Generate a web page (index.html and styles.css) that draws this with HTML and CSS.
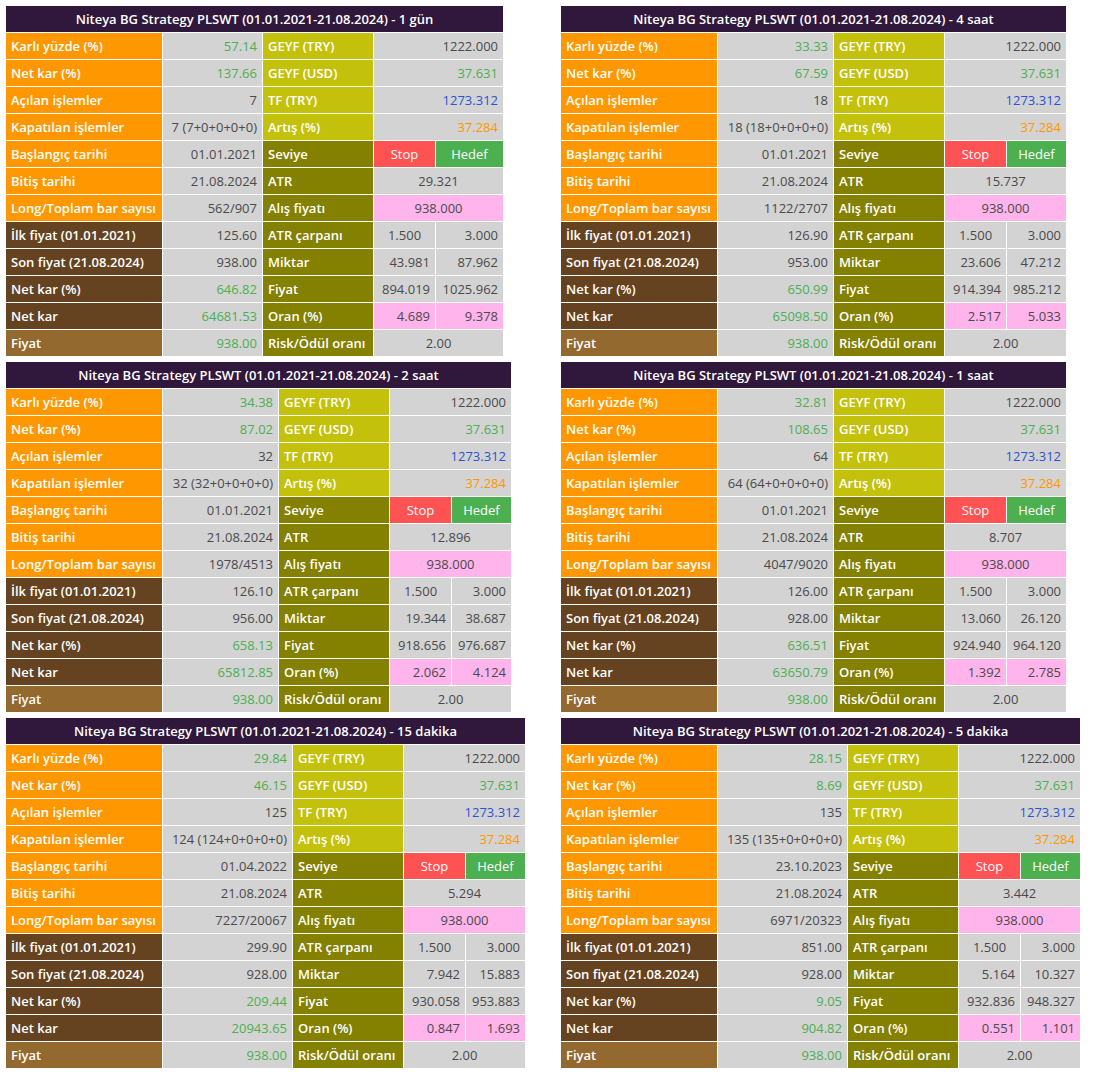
FILE: index.html
```html
<!DOCTYPE html>
<html lang="tr">
<head>
<meta charset="utf-8">
<title>Niteya BG Strategy PLSWT</title>
<link rel="stylesheet" href="styles.css">
</head>
<body>
<div class="board">

<table class="t">
<colgroup><col class="c1"><col class="c2a"><col class="c3"><col class="c4"><col class="c5a"></colgroup>
<tr><th colspan="5">Niteya BG Strategy PLSWT (01.01.2021-21.08.2024) - 1 gün</th></tr>
<tr><td class="l or">Karlı yüzde (%)</td><td class="v tg">57.14</td><td class="l ye">GEYF (TRY)</td><td class="v" colspan="2">1222.000</td></tr>
<tr><td class="l or">Net kar (%)</td><td class="v tg">137.66</td><td class="l ye">GEYF (USD)</td><td class="v tg" colspan="2">37.631</td></tr>
<tr><td class="l or">Açılan işlemler</td><td class="v">7</td><td class="l ye">TF (TRY)</td><td class="v tb" colspan="2">1273.312</td></tr>
<tr><td class="l or">Kapatılan işlemler</td><td class="v">7 (7+0+0+0+0)</td><td class="l ye">Artış (%)</td><td class="v to" colspan="2">37.284</td></tr>
<tr><td class="l or">Başlangıç tarihi</td><td class="v">01.01.2021</td><td class="l ol">Seviye</td><td class="stop">Stop</td><td class="hedef">Hedef</td></tr>
<tr><td class="l or">Bitiş tarihi</td><td class="v">21.08.2024</td><td class="l ol">ATR</td><td class="v c" colspan="2">29.321</td></tr>
<tr><td class="l or">Long/Toplam bar sayısı</td><td class="v">562/907</td><td class="l ol">Alış fiyatı</td><td class="v c pk" colspan="2">938.000</td></tr>
<tr><td class="l br">İlk fiyat (01.01.2021)</td><td class="v">125.60</td><td class="l ol">ATR çarpanı</td><td class="v c">1.500</td><td class="v">3.000</td></tr>
<tr><td class="l br">Son fiyat (21.08.2024)</td><td class="v">938.00</td><td class="l ol">Miktar</td><td class="v">43.981</td><td class="v">87.962</td></tr>
<tr><td class="l br">Net kar (%)</td><td class="v tg">646.82</td><td class="l ol">Fiyat</td><td class="v">894.019</td><td class="v">1025.962</td></tr>
<tr><td class="l br">Net kar</td><td class="v tg">64681.53</td><td class="l ol">Oran (%)</td><td class="v pk">4.689</td><td class="v pk">9.378</td></tr>
<tr><td class="l lb">Fiyat</td><td class="v tg">938.00</td><td class="l ol">Risk/Ödül oranı</td><td class="v c" colspan="2">2.00</td></tr>
</table>

<table class="t">
<colgroup><col class="c1"><col class="c2b"><col class="c3"><col class="c4"><col class="c5b"></colgroup>
<tr><th colspan="5">Niteya BG Strategy PLSWT (01.01.2021-21.08.2024) - 4 saat</th></tr>
<tr><td class="l or">Karlı yüzde (%)</td><td class="v tg">33.33</td><td class="l ye">GEYF (TRY)</td><td class="v" colspan="2">1222.000</td></tr>
<tr><td class="l or">Net kar (%)</td><td class="v tg">67.59</td><td class="l ye">GEYF (USD)</td><td class="v tg" colspan="2">37.631</td></tr>
<tr><td class="l or">Açılan işlemler</td><td class="v">18</td><td class="l ye">TF (TRY)</td><td class="v tb" colspan="2">1273.312</td></tr>
<tr><td class="l or">Kapatılan işlemler</td><td class="v">18 (18+0+0+0+0)</td><td class="l ye">Artış (%)</td><td class="v to" colspan="2">37.284</td></tr>
<tr><td class="l or">Başlangıç tarihi</td><td class="v">01.01.2021</td><td class="l ol">Seviye</td><td class="stop">Stop</td><td class="hedef">Hedef</td></tr>
<tr><td class="l or">Bitiş tarihi</td><td class="v">21.08.2024</td><td class="l ol">ATR</td><td class="v c" colspan="2">15.737</td></tr>
<tr><td class="l or">Long/Toplam bar sayısı</td><td class="v">1122/2707</td><td class="l ol">Alış fiyatı</td><td class="v c pk" colspan="2">938.000</td></tr>
<tr><td class="l br">İlk fiyat (01.01.2021)</td><td class="v">126.90</td><td class="l ol">ATR çarpanı</td><td class="v c">1.500</td><td class="v">3.000</td></tr>
<tr><td class="l br">Son fiyat (21.08.2024)</td><td class="v">953.00</td><td class="l ol">Miktar</td><td class="v">23.606</td><td class="v">47.212</td></tr>
<tr><td class="l br">Net kar (%)</td><td class="v tg">650.99</td><td class="l ol">Fiyat</td><td class="v">914.394</td><td class="v">985.212</td></tr>
<tr><td class="l br">Net kar</td><td class="v tg">65098.50</td><td class="l ol">Oran (%)</td><td class="v pk">2.517</td><td class="v pk">5.033</td></tr>
<tr><td class="l lb">Fiyat</td><td class="v tg">938.00</td><td class="l ol">Risk/Ödül oranı</td><td class="v c" colspan="2">2.00</td></tr>
</table>

<table class="t">
<colgroup><col class="c1"><col class="c2b"><col class="c3"><col class="c4"><col class="c5b"></colgroup>
<tr><th colspan="5">Niteya BG Strategy PLSWT (01.01.2021-21.08.2024) - 2 saat</th></tr>
<tr><td class="l or">Karlı yüzde (%)</td><td class="v tg">34.38</td><td class="l ye">GEYF (TRY)</td><td class="v" colspan="2">1222.000</td></tr>
<tr><td class="l or">Net kar (%)</td><td class="v tg">87.02</td><td class="l ye">GEYF (USD)</td><td class="v tg" colspan="2">37.631</td></tr>
<tr><td class="l or">Açılan işlemler</td><td class="v">32</td><td class="l ye">TF (TRY)</td><td class="v tb" colspan="2">1273.312</td></tr>
<tr><td class="l or">Kapatılan işlemler</td><td class="v">32 (32+0+0+0+0)</td><td class="l ye">Artış (%)</td><td class="v to" colspan="2">37.284</td></tr>
<tr><td class="l or">Başlangıç tarihi</td><td class="v">01.01.2021</td><td class="l ol">Seviye</td><td class="stop">Stop</td><td class="hedef">Hedef</td></tr>
<tr><td class="l or">Bitiş tarihi</td><td class="v">21.08.2024</td><td class="l ol">ATR</td><td class="v c" colspan="2">12.896</td></tr>
<tr><td class="l or">Long/Toplam bar sayısı</td><td class="v">1978/4513</td><td class="l ol">Alış fiyatı</td><td class="v c pk" colspan="2">938.000</td></tr>
<tr><td class="l br">İlk fiyat (01.01.2021)</td><td class="v">126.10</td><td class="l ol">ATR çarpanı</td><td class="v c">1.500</td><td class="v">3.000</td></tr>
<tr><td class="l br">Son fiyat (21.08.2024)</td><td class="v">956.00</td><td class="l ol">Miktar</td><td class="v">19.344</td><td class="v">38.687</td></tr>
<tr><td class="l br">Net kar (%)</td><td class="v tg">658.13</td><td class="l ol">Fiyat</td><td class="v">918.656</td><td class="v">976.687</td></tr>
<tr><td class="l br">Net kar</td><td class="v tg">65812.85</td><td class="l ol">Oran (%)</td><td class="v pk">2.062</td><td class="v pk">4.124</td></tr>
<tr><td class="l lb">Fiyat</td><td class="v tg">938.00</td><td class="l ol">Risk/Ödül oranı</td><td class="v c" colspan="2">2.00</td></tr>
</table>

<table class="t">
<colgroup><col class="c1"><col class="c2b"><col class="c3"><col class="c4"><col class="c5b"></colgroup>
<tr><th colspan="5">Niteya BG Strategy PLSWT (01.01.2021-21.08.2024) - 1 saat</th></tr>
<tr><td class="l or">Karlı yüzde (%)</td><td class="v tg">32.81</td><td class="l ye">GEYF (TRY)</td><td class="v" colspan="2">1222.000</td></tr>
<tr><td class="l or">Net kar (%)</td><td class="v tg">108.65</td><td class="l ye">GEYF (USD)</td><td class="v tg" colspan="2">37.631</td></tr>
<tr><td class="l or">Açılan işlemler</td><td class="v">64</td><td class="l ye">TF (TRY)</td><td class="v tb" colspan="2">1273.312</td></tr>
<tr><td class="l or">Kapatılan işlemler</td><td class="v">64 (64+0+0+0+0)</td><td class="l ye">Artış (%)</td><td class="v to" colspan="2">37.284</td></tr>
<tr><td class="l or">Başlangıç tarihi</td><td class="v">01.01.2021</td><td class="l ol">Seviye</td><td class="stop">Stop</td><td class="hedef">Hedef</td></tr>
<tr><td class="l or">Bitiş tarihi</td><td class="v">21.08.2024</td><td class="l ol">ATR</td><td class="v c" colspan="2">8.707</td></tr>
<tr><td class="l or">Long/Toplam bar sayısı</td><td class="v">4047/9020</td><td class="l ol">Alış fiyatı</td><td class="v c pk" colspan="2">938.000</td></tr>
<tr><td class="l br">İlk fiyat (01.01.2021)</td><td class="v">126.00</td><td class="l ol">ATR çarpanı</td><td class="v c">1.500</td><td class="v">3.000</td></tr>
<tr><td class="l br">Son fiyat (21.08.2024)</td><td class="v">928.00</td><td class="l ol">Miktar</td><td class="v">13.060</td><td class="v">26.120</td></tr>
<tr><td class="l br">Net kar (%)</td><td class="v tg">636.51</td><td class="l ol">Fiyat</td><td class="v">924.940</td><td class="v">964.120</td></tr>
<tr><td class="l br">Net kar</td><td class="v tg">63650.79</td><td class="l ol">Oran (%)</td><td class="v pk">1.392</td><td class="v pk">2.785</td></tr>
<tr><td class="l lb">Fiyat</td><td class="v tg">938.00</td><td class="l ol">Risk/Ödül oranı</td><td class="v c" colspan="2">2.00</td></tr>
</table>

<table class="t">
<colgroup><col class="c1"><col class="c2c"><col class="c3"><col class="c4"><col class="c5b"></colgroup>
<tr><th colspan="5">Niteya BG Strategy PLSWT (01.01.2021-21.08.2024) - 15 dakika</th></tr>
<tr><td class="l or">Karlı yüzde (%)</td><td class="v tg">29.84</td><td class="l ye">GEYF (TRY)</td><td class="v" colspan="2">1222.000</td></tr>
<tr><td class="l or">Net kar (%)</td><td class="v tg">46.15</td><td class="l ye">GEYF (USD)</td><td class="v tg" colspan="2">37.631</td></tr>
<tr><td class="l or">Açılan işlemler</td><td class="v">125</td><td class="l ye">TF (TRY)</td><td class="v tb" colspan="2">1273.312</td></tr>
<tr><td class="l or">Kapatılan işlemler</td><td class="v">124 (124+0+0+0+0)</td><td class="l ye">Artış (%)</td><td class="v to" colspan="2">37.284</td></tr>
<tr><td class="l or">Başlangıç tarihi</td><td class="v">01.04.2022</td><td class="l ol">Seviye</td><td class="stop">Stop</td><td class="hedef">Hedef</td></tr>
<tr><td class="l or">Bitiş tarihi</td><td class="v">21.08.2024</td><td class="l ol">ATR</td><td class="v c" colspan="2">5.294</td></tr>
<tr><td class="l or">Long/Toplam bar sayısı</td><td class="v">7227/20067</td><td class="l ol">Alış fiyatı</td><td class="v c pk" colspan="2">938.000</td></tr>
<tr><td class="l br">İlk fiyat (01.01.2021)</td><td class="v">299.90</td><td class="l ol">ATR çarpanı</td><td class="v c">1.500</td><td class="v">3.000</td></tr>
<tr><td class="l br">Son fiyat (21.08.2024)</td><td class="v">928.00</td><td class="l ol">Miktar</td><td class="v">7.942</td><td class="v">15.883</td></tr>
<tr><td class="l br">Net kar (%)</td><td class="v tg">209.44</td><td class="l ol">Fiyat</td><td class="v">930.058</td><td class="v">953.883</td></tr>
<tr><td class="l br">Net kar</td><td class="v tg">20943.65</td><td class="l ol">Oran (%)</td><td class="v pk">0.847</td><td class="v pk">1.693</td></tr>
<tr><td class="l lb">Fiyat</td><td class="v tg">938.00</td><td class="l ol">Risk/Ödül oranı</td><td class="v c" colspan="2">2.00</td></tr>
</table>

<table class="t">
<colgroup><col class="c1"><col class="c2c"><col class="c3"><col class="c4"><col class="c5b"></colgroup>
<tr><th colspan="5">Niteya BG Strategy PLSWT (01.01.2021-21.08.2024) - 5 dakika</th></tr>
<tr><td class="l or">Karlı yüzde (%)</td><td class="v tg">28.15</td><td class="l ye">GEYF (TRY)</td><td class="v" colspan="2">1222.000</td></tr>
<tr><td class="l or">Net kar (%)</td><td class="v tg">8.69</td><td class="l ye">GEYF (USD)</td><td class="v tg" colspan="2">37.631</td></tr>
<tr><td class="l or">Açılan işlemler</td><td class="v">135</td><td class="l ye">TF (TRY)</td><td class="v tb" colspan="2">1273.312</td></tr>
<tr><td class="l or">Kapatılan işlemler</td><td class="v">135 (135+0+0+0+0)</td><td class="l ye">Artış (%)</td><td class="v to" colspan="2">37.284</td></tr>
<tr><td class="l or">Başlangıç tarihi</td><td class="v">23.10.2023</td><td class="l ol">Seviye</td><td class="stop">Stop</td><td class="hedef">Hedef</td></tr>
<tr><td class="l or">Bitiş tarihi</td><td class="v">21.08.2024</td><td class="l ol">ATR</td><td class="v c" colspan="2">3.442</td></tr>
<tr><td class="l or">Long/Toplam bar sayısı</td><td class="v">6971/20323</td><td class="l ol">Alış fiyatı</td><td class="v c pk" colspan="2">938.000</td></tr>
<tr><td class="l br">İlk fiyat (01.01.2021)</td><td class="v">851.00</td><td class="l ol">ATR çarpanı</td><td class="v c">1.500</td><td class="v">3.000</td></tr>
<tr><td class="l br">Son fiyat (21.08.2024)</td><td class="v">928.00</td><td class="l ol">Miktar</td><td class="v">5.164</td><td class="v">10.327</td></tr>
<tr><td class="l br">Net kar (%)</td><td class="v tg">9.05</td><td class="l ol">Fiyat</td><td class="v">932.836</td><td class="v">948.327</td></tr>
<tr><td class="l br">Net kar</td><td class="v tg">904.82</td><td class="l ol">Oran (%)</td><td class="v pk">0.551</td><td class="v pk">1.101</td></tr>
<tr><td class="l lb">Fiyat</td><td class="v tg">938.00</td><td class="l ol">Risk/Ödül oranı</td><td class="v c" colspan="2">2.00</td></tr>
</table>

</div>
</body>
</html>
```

FILE: styles.css
```css
html, body {
  margin: 0;
  padding: 0;
  background: #ffffff;
}

body {
  font-family: "Open Sans", "Liberation Sans", sans-serif;
  font-size: 13px;
}

.board {
  display: grid;
  grid-template-columns: 555px auto;
  row-gap: 4px;
  padding: 5px 0 0 5px;
  align-items: start;
  justify-items: start;
}

.t {
  border-collapse: separate;
  border-spacing: 1px;
  background: #ffffff;
  white-space: nowrap;
}

.c1 { width: 156px; }
.c2a { width: 99px; }
.c2b { width: 115px; }
.c2c { width: 129px; }
.c3 { width: 110px; }
.c4 { width: 61px; }
.c5a { width: 67px; }
.c5b { width: 59px; }

.t th {
  height: 26px;
  padding: 0 5px 1px;
  background: #30173c;
  color: #ffffff;
  font-weight: 600;
  text-align: center;
  box-sizing: border-box;
}

.t td {
  height: 26px;
  padding: 0 5px 1px;
  box-sizing: border-box;
  vertical-align: middle;
}

.l {
  color: #ffffff;
  text-align: left;
  font-weight: 600;
}

.or { background: #ff9800; }
.br { background: #654321; }
.lb { background: #946930; }
.ye { background: #c4c10d; }
.ol { background: #848000; }

.v {
  background: #d3d3d3;
  color: #4a4a4a;
  text-align: right;
}

.v.c { text-align: center; }
.v.pk { background: #ffb4ec; }

.tg { color: #4caf50; }
.tb { color: #2a52d4; }
.to { color: #ff9800; }

.stop {
  background: #ff5252;
  color: #ffffff;
  text-align: center;
}

.hedef {
  background: #4caf50;
  color: #ffffff;
  text-align: center;
}
```
